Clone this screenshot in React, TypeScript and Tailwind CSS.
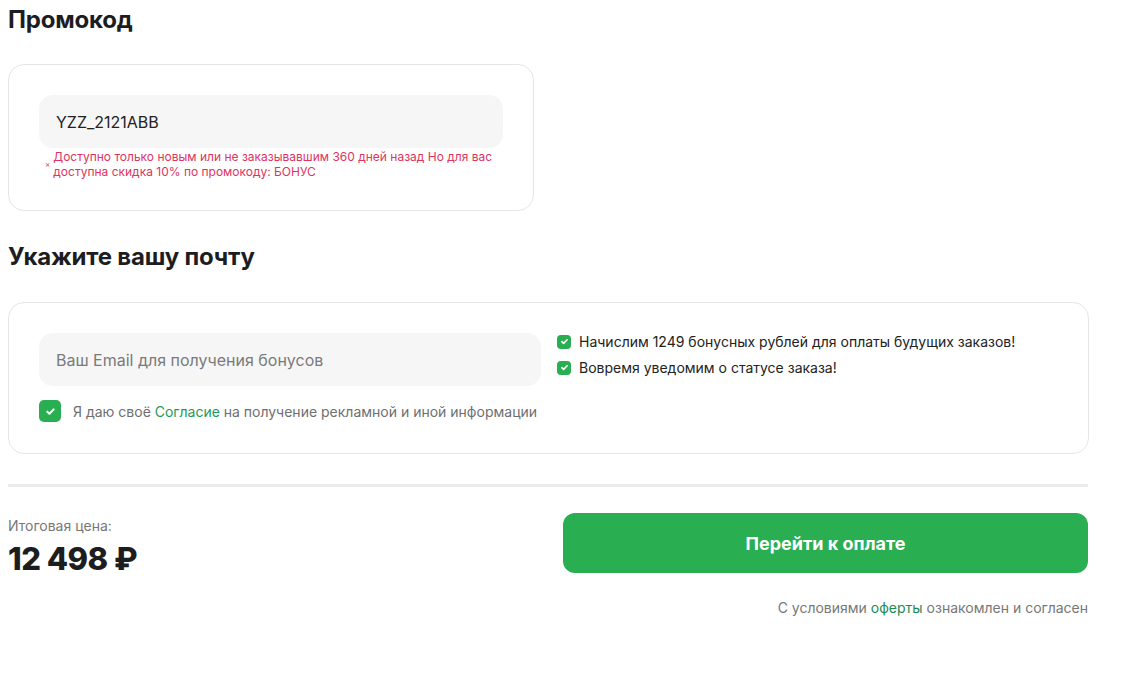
import React from "react";

const font = { fontFamily: "Inter, 'Noto Sans', sans-serif" };

function Check({ className, size }: { className: string; size: string }) {
    return (
        <span className={`flex items-center justify-center bg-[#2aae52] ${className}`}>
            <svg viewBox="0 0 12 12" className={size} fill="none" stroke="white" strokeWidth="2.2" strokeLinecap="round" strokeLinejoin="round">
                <path d="M2.5 6.2l2.3 2.3 4.7-4.8" />
            </svg>
        </span>
    );
}

export default function App() {
    return (
        <div className="w-[1138px] h-[698px] bg-white px-2 pt-[4px] text-[#1d1d1f]" style={font}>
            <h2 className="text-[24px] font-bold leading-[32px] tracking-[-0.2px]">Промокод</h2>

            <div className="mt-[28px] w-[526px] rounded-[16px] border border-[#e6e6e6] px-[30px] pt-[30px] pb-[31px]">
                <div className="h-[53px] rounded-[14px] bg-[#f6f6f6] flex items-center px-[17px] text-[16px] text-[#222]">
                    YZZ_2121ABB
                </div>
                <div className="mt-[1px] flex gap-[3px] pl-[6px] text-[12px] leading-[15px] text-[#e0335f]">
                    <span className="text-[8px] mt-[8px]">×</span>
                    <span>Доступно только новым или не заказывавшим 360 дней назад Но для вас<br />доступна скидка 10% по промокоду: БОНУС</span>
                </div>
            </div>

            <h2 className="mt-[30px] text-[24px] font-bold leading-[32px] tracking-[-0.2px]">Укажите вашу почту</h2>

            <div className="mt-[29px] w-[1081px] rounded-[16px] border border-[#e6e6e6] px-[30px] pt-[30px] pb-[31px] flex gap-[16px]">
                <div className="w-[502px]">
                    <div className="h-[53px] rounded-[14px] bg-[#f6f6f6] flex items-center px-[17px] text-[16px] text-[#7a7a7a]">
                        Ваш Email для получения бонусов
                    </div>
                    <div className="mt-[14px] flex items-center gap-[12px] text-[14px] text-[#6f6f6f]">
                        <Check className="w-[22px] h-[22px] rounded-[5px]" size="w-[11px] h-[11px]" />
                        <span>
                            Я даю своё <span className="text-[#1e9a58]">Согласие</span> на получение рекламной и иной информации
                        </span>
                    </div>
                </div>
                <div className="-mt-[1px] flex flex-col gap-[7px] text-[14px] text-[#222]">
                    <div className="flex items-center gap-[8px] h-[19px]">
                        <Check className="w-[14px] h-[14px] rounded-[4px]" size="w-[9px] h-[9px]" />
                        Начислим 1249 бонусных рублей для оплаты будущих заказов!
                    </div>
                    <div className="flex items-center gap-[8px] h-[19px]">
                        <Check className="w-[14px] h-[14px] rounded-[4px]" size="w-[9px] h-[9px]" />
                        Вовремя уведомим о статусе заказа!
                    </div>
                </div>
            </div>

            <div className="mt-[30px] w-[1080px] h-[3px] bg-[#ebebeb]" />

            <div className="mt-[26px] w-[1080px] flex justify-between">
                <div className="pt-[4px]">
                    <div className="text-[14px] text-[#777] leading-[18px]">Итоговая цена:</div>
                    <div className="mt-[6px] text-[31px] font-extrabold leading-[36px] tracking-[-0.5px]">12 498 ₽</div>
                </div>
                <div className="w-[525px] flex flex-col items-end">
                    <button className="w-full h-[60px] rounded-[12px] bg-[#2aae52] text-white text-[18px] font-bold">
                        Перейти к оплате
                    </button>
                    <div className="mt-[24px] text-[14px] text-[#777]">
                        С условиями <span className="text-[#1e8a55]">оферты</span> ознакомлен и согласен
                    </div>
                </div>
            </div>
        </div>
    );
}
